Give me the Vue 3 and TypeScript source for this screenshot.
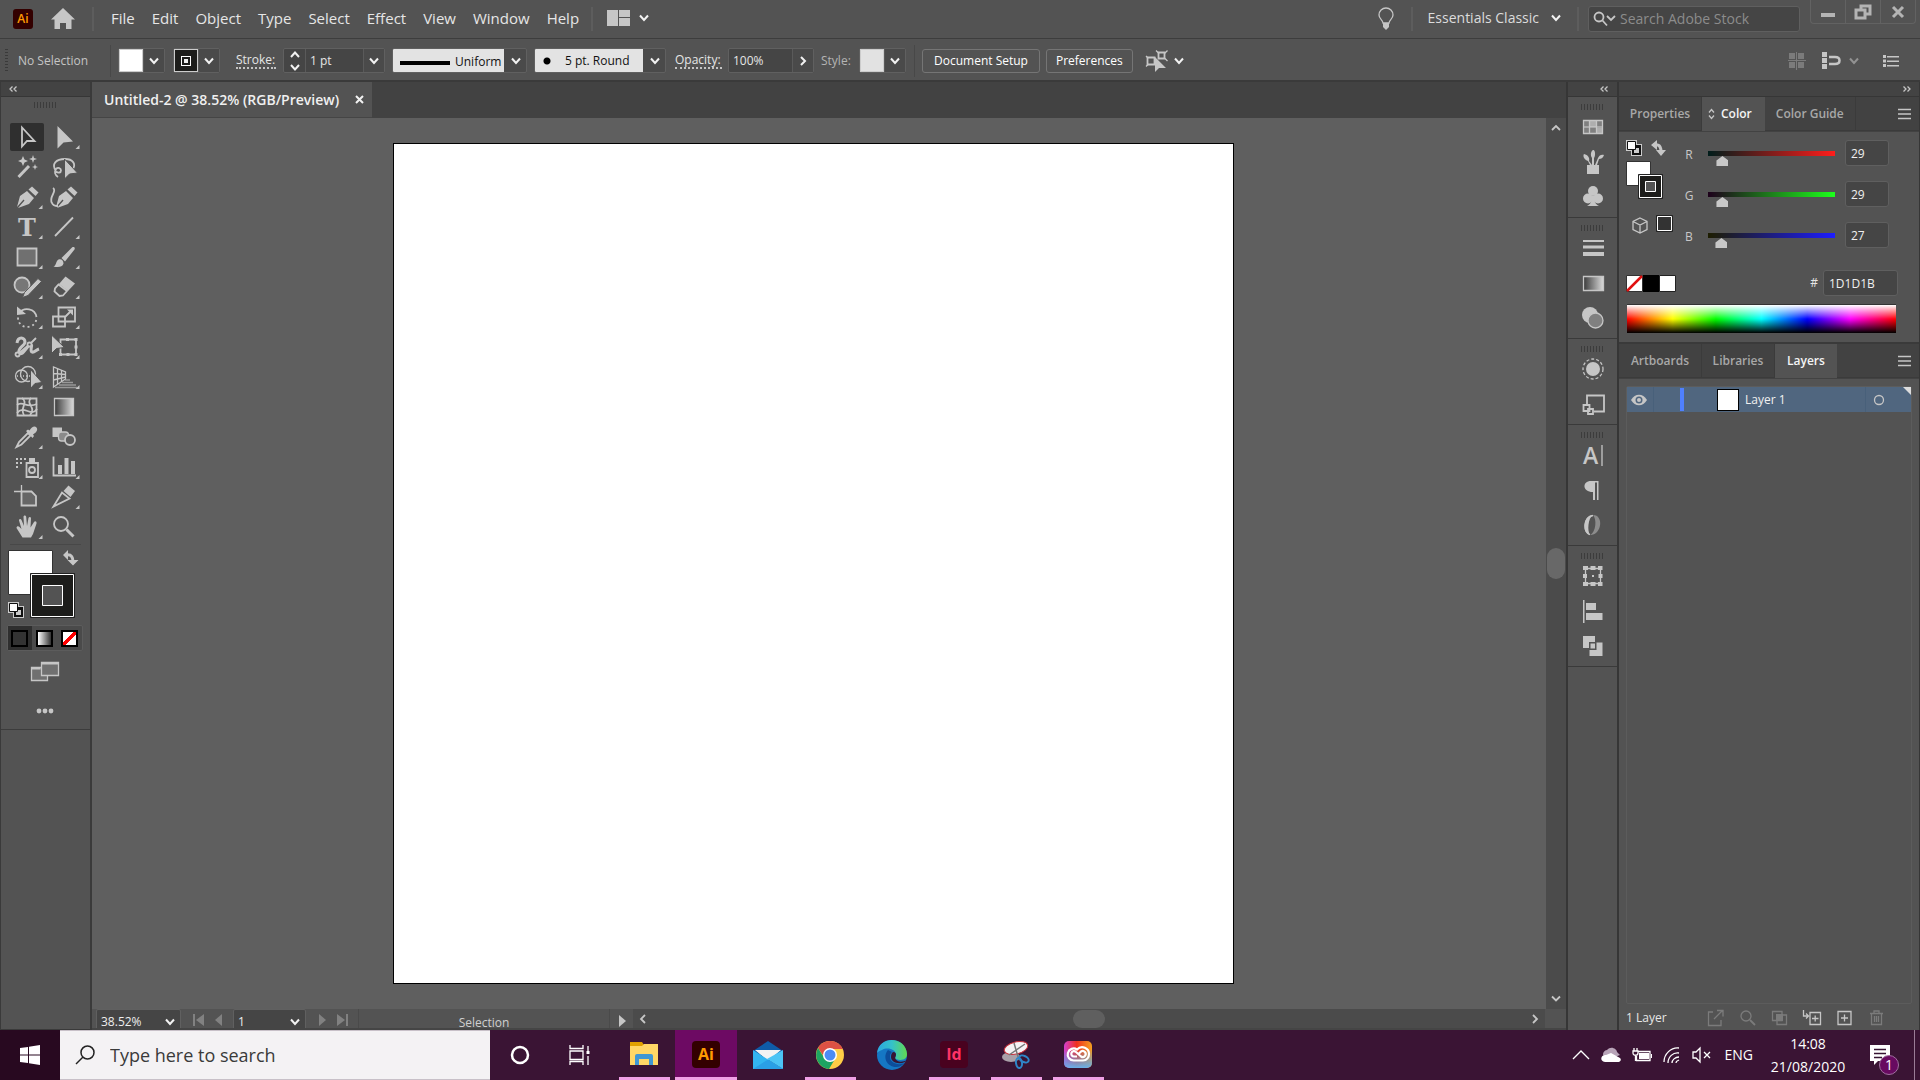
<script setup lang="ts">
import { ref } from 'vue'

interface Tool { name: string; icon: string; more?: boolean }
interface Glyph { name: string; icon: string }
interface Channel { id: string; value: number; track: string }
interface TaskApp { name: string; icon: string; state: 'idle' | 'open' | 'active' }

const menus = ['File', 'Edit', 'Object', 'Type', 'Select', 'Effect', 'View', 'Window', 'Help']

const penNib = '<path class="f" d="M7 24 10 13 17 8 24 15 19 21 8 25 14.500 17.500 13.500 16.500z"/><path class="f" d="M18.500 6.500 22 3.500 28.500 9.500 25.500 13z"/>'

const tools: Tool[] = [
  { name: 'Selection', icon: '<path class="s" d="M12 4.500v19l5-5.500h7.500z"/>' },
  { name: 'Direct Selection', more: true, icon: '<path class="f" d="M10.500 3v22.500l6-6 9.500-1z"/>' },
  { name: 'Magic Wand', icon: '<path class="s3" d="M8.500 24 19 13"/><path class="f" d="m13 3 1.500 3.500L18 8l-3.500 1.500L13 13l-1.500-3.500L8 8l3.500-1.500zM23 2l1 3 3 1-3 1-1 3-1-3-3-1 3-1zM25 11l.8 2.200 2.200.8-2.200.8L25 17l-.8-2.200L22 14l2.200-.8z"/>' },
  { name: 'Lasso', icon: '<path class="s" d="M9 18c-5-7 0-12 9-12 8 0 11 5 8 10M11 24c-3-2-4-5-2-8 2-2 5-1 5 1.500S11 20 9 18.500"/><path class="f" stroke="#535353" d="M17.500 6v20l5-5 8-1z"/>' },
  { name: 'Pen', more: true, icon: penNib },
  { name: 'Curvature', icon: '<g transform="translate(2 0)">' + penNib + '</g><path class="s" d="M6 5c5 3-5 9-1 15 1 3 4 3 6 3"/>' },
  { name: 'Type', more: true, icon: '<text class="f" x="17" y="23" text-anchor="middle" font-family="DejaVu Serif, serif" font-weight="700" font-size="24">T</text>' },
  { name: 'Line Segment', more: true, icon: '<path class="s" d="M8 23 26 4.500"/>' },
  { name: 'Rectangle', more: true, icon: '<path class="s" style="fill:#707070" d="M7.500 5.500h19v17h-19z"/>' },
  { name: 'Paintbrush', more: true, icon: '<path class="f" d="M6.500 23.500c3-1 2-5 5-7 3-1 5 1 5 4-1 4-6 4-10 3zM14.500 15 25 4.500c1.500-1 3.500 0 2.500 2L18 18.500z"/>' },
  { name: 'Shaper', more: true, icon: '<circle class="s" style="fill:#777" cx="12" cy="12" r="7.500"/><path class="f" stroke="#535353" d="M12.500 24.500l2-5L28 5.500l3.500 3L18 22.500z"/>' },
  { name: 'Eraser', more: true, icon: '<path class="f" d="m18.500 3.500 9.500 7-7 7.500-9-7z"/><path class="s" d="m11.500 11.500 8.500 6.500-4 4.500-3.500.5-5-4.500.5-3z"/>' },
  { name: 'Rotate', more: true, icon: '<path class="s" d="M9.500 9.500C14 4 25 5 26.500 14"/><path class="f" d="M7 3.500V12l9-1z"/><path class="s" stroke-dasharray="2 3" d="M8 14.500C8 27 26 27 26.500 15"/>' },
  { name: 'Scale', more: true, icon: '<path class="s" d="M11.500 4.500h16.500v14H11.500zM6 13.500h12v10H6zM18 14l5-5"/><path class="f" d="M20 6.500h6v6z"/>' },
  { name: 'Width', more: true, icon: '<path class="s3" d="M7 10c1-7 8-6 8-1 0 4-8 6-6 11 4 3 7-6 11-8 4-1-1 5 2 7 2 1 4-2 7-3"/><path class="s" d="M8 21 20 11M20 11l6-6"/><circle class="s" cx="7.500" cy="21.500" r="2" style="fill:#535353"/><circle class="s" cx="19.500" cy="11.500" r="2" style="fill:#535353"/>' },
  { name: 'Free Transform', more: true, icon: '<path class="s" d="M13.500 6.500h15.500v15H13.500z"/><path class="f" d="M19 5h3v3h-3zM27.500 5h3v3h-3zM27.500 12.500h3v3h-3zM27.500 20h3v3h-3zM19.500 20h3v3h-3zM12 20h3v3h-3z"/><path class="f" stroke="#535353" d="M4.500 2v18.500l5-5 8-1z"/>' },
  { name: 'Shape Builder', more: true, icon: '<circle class="s1" cx="11.500" cy="13" r="6"/><circle class="s1" cx="18" cy="11" r="7.500"/><path class="s1" stroke-dasharray="1 2" d="M7 13h17"/><path class="f" stroke="#535353" d="M20.500 6.500v19l4.500-5 7-1z"/>' },
  { name: 'Perspective Grid', more: true, icon: '<path class="s1" d="M6.500 4v20l12-8V9zM10.500 6v15M14.500 7.500v11M6.500 10.500l12 1M6.500 17l12-3"/><path class="s1" opacity=".6" d="M18 17h5M15 19.500h11M12 22h17M8 24.500h22"/>' },
  { name: 'Mesh', icon: '<path class="s" d="M7.500 5.500h19v17h-19z"/><path class="s" d="M7 12c6-5 9 4 20-1M7 20c7-9 14 5 20-4M12 5c7 5-3 10 2 17M21 5c-6 6 6 9-1 17"/>' },
  { name: 'Gradient', icon: '<path class="s1" style="fill:url(#ramp)" d="M7.500 5.500h19v17h-19z"/>' },
  { name: 'Eyedropper', more: true, icon: '<path class="s" d="m18 10-9 9-2.500 5 5-2.500 9-9z"/><path class="f" d="M16 8l2-1.500 1.500 1C22 3 25 2.500 26.500 4.500S27 9 23 11.500l1 1.500-1.500 2z"/>' },
  { name: 'Blend', icon: '<path class="f" d="M5.500 4.500H15V14H5.500z"/><rect class="s1" x="11.500" y="9" width="10" height="9" rx="3" style="fill:#8a8a8a"/><circle class="s" cx="23" cy="17" r="5" style="fill:#5c5c5c"/>' },
  { name: 'Symbol Sprayer', more: true, icon: '<path class="s" d="M16.500 10h11.500v14H16.500z"/><path class="f" d="M19 5h6v4h-6z"/><circle class="s" cx="22" cy="17" r="3"/><path class="f" d="M6 5h2v2H6zM10 5h2v2h-2zM14 5h2v2h-2zM6 9h2v2H6zM10 9h2v2h-2zM6 13h2v2H6z"/>' },
  { name: 'Column Graph', more: true, icon: '<path class="s" d="M6.500 3.500V22.500H29"/><path class="f" d="M11 12h4v9h-4zM17.500 5h4v16h-4zM24 8h4v13h-4z"/>' },
  { name: 'Artboard', icon: '<path class="s1" d="M4 8.500h8M11.500 2v6"/><path class="s" style="fill:#666" d="M11.500 8.500h10l4.500 4.500v9.500H11.500z"/>' },
  { name: 'Slice', more: true, icon: '<path class="s" d="M6.500 23.500 15 9.500l7.500 6z"/><path class="f" d="m16.500 8 5-5.500 6.500 5.500-4.500 6z"/>' },
  { name: 'Hand', more: true, icon: '<path class="f" d="M12.500 24.500 6.500 15c0-2 2-2 3-1l2 2L9 7.500c0-2 2-2 2.500-.5l2.500 6-.5-9c0-2 2.500-2 2.700 0l.8 9 1.500-8c.5-1.500 2.500-1.500 2.500.5l-.5 9L24 9c1-1.500 3-.5 2.500 1.500L23 21l-2 3.500z"/>' },
  { name: 'Zoom', icon: '<circle class="s" cx="14" cy="11" r="7"/><path class="s3" d="m19.500 16.500 7 7"/>' },
]

const dockGroups: Glyph[][] = [
  [
    { name: 'Swatches', icon: '<path class="s1" d="M2.500 5.500h19v13h-19zM2.500 12h19M8.500 5.500v13M15.500 5.500v13"/><path class="f" d="M9 6h6v6H9zM16 13h5v5h-5z" opacity=".8"/><path class="f" opacity=".4" d="M3 6h5v5H3zM3 13h12v5H3zM16 6h5v5h-5z"/>' },
    { name: 'Brushes', icon: '<path class="f" d="M6 15h12v9H6zM9 15 7 11C2 9 2 5 3 4c4 1 6 4 5 7l3 4zM11 15V8C9 5 10 1 12 0s3 5 1 8v7zM14 15l3-7c1-3 4-4 6-3-1 3-3 4-5 4l-2 6z"/>' },
    { name: 'Symbols', icon: '<circle class="f" cx="12" cy="6" r="5"/><circle class="f" cx="7" cy="13.500" r="5"/><circle class="f" cx="17" cy="13.500" r="5"/><path class="f" d="M11 11h2c0 5 1 8 5 10H6c4-2 5-5 5-10z"/>' },
  ],
  [
    { name: 'Stroke', icon: '<path class="f" d="M2 4h21v2H2zM2 9.500h21v3H2zM2 16h21v4H2z"/>' },
    { name: 'Gradient', icon: '<path class="s1" style="fill:url(#ramp)" d="M2.500 5.500h20v14h-20z"/>' },
    { name: 'Transparency', icon: '<circle class="f" cx="9" cy="9" r="8"/><circle class="s1" style="fill:#808080" cx="14.500" cy="14.500" r="7.500"/>' },
  ],
  [
    { name: 'Appearance', icon: '<circle class="f" cx="12" cy="12" r="7"/><circle class="s1" cx="12" cy="12" r="10" stroke-dasharray="3 2"/>' },
    { name: 'Graphic Styles', icon: '<path class="s" d="M6 12V3.500h17v16H13M2.500 13h6v6h-6zM7 17h5v5H7z"/>' },
  ],
  [
    { name: 'Character', icon: '<text class="f" x="2" y="21" font-family="Open Sans, sans-serif" font-weight="600" font-size="23">A</text><path class="s1" d="M21 2v21"/>' },
    { name: 'Paragraph', icon: '<path class="f" d="M17.500 3v19H16V4.500h-2V22h-2v-8C1 14 1 3 10 3z"/>' },
    { name: 'OpenType', icon: '<path class="f" d="M12 2C1 3 1 20 9 22c-3-4-2-17 3-20z"/><path class="f" opacity=".5" d="M12 2c11 0 9 20-3 20 6-3 7-16 3-20z"/><path class="s1" d="M12 2.500C2 4 2 21 9 21.500"/>' },
  ],
  [
    { name: 'Transform', icon: '<path class="s1" d="M4.500 4.500h15v15h-15z"/><path class="f" d="M2 2h5v4H2zM9.500 2h5v4h-5zM17 2h4.500v4H17zM2 10h4v4H2zM17.500 10h4v4h-4zM2 18h5v4H2zM9.500 18h5v4h-5zM17 18h4.500v4H17zM11 11h2v2h-2z"/>' },
    { name: 'Align', icon: '<path class="f" d="M2 1h1.500v23H2zM5 4h10v7H5zM5 14h16.500v7H5z"/>' },
    { name: 'Pathfinder', icon: '<path class="f" d="M2 2h12v6H8v6H2zM15.500 8.500h6V22H8.500v-6h7zM9.500 9.500H14v5H9.500z"/>' },
  ],
]

const channels = ref<Channel[]>([
  { id: 'R', value: 29, track: 'linear-gradient(90deg, #001d1b, #ff1d1b)' },
  { id: 'G', value: 29, track: 'linear-gradient(90deg, #1d001b, #1dff1b)' },
  { id: 'B', value: 27, track: 'linear-gradient(90deg, #1d1d00, #1d1dff)' },
])
const hex = ref('1D1D1B')

const layerActions: (Glyph & { off: boolean })[] = [
  { name: 'Collect for Export', off: true, icon: '<path class="s1" d="M6 3H1.500v13.500H14V11M7 10l8.500-8.500M10 1.500h6v6"/>' },
  { name: 'Locate Object', off: true, icon: '<circle class="s1" cx="7" cy="7" r="5"/><path class="s" d="m11 11 5 5"/>' },
  { name: 'Make Clipping Mask', off: true, icon: '<path class="s1" d="M1.500 2.500h9.500v9H1.500zM6 6h9.500v9.500H6z"/><path class="f" d="M5 5h7v7H5z"/>' },
  { name: 'Create New Sublayer', off: false, icon: '<path class="s1" d="M.500 1v6H5M3 4.500 5.500 7 3 9.500M7 3.500h10.500v12H7zM12.200 6.500v6M9 9.500h6.500"/>' },
  { name: 'Create New Layer', off: false, icon: '<path class="s1" d="M3 2.500h13v13H3zM9.500 5.500v7M6 9h7"/>' },
  { name: 'Delete', off: true, icon: '<path class="s1" d="M3 4.500h13M7 4V2h5v2M4.500 4.500v11h10v-11M7.500 7v6M9.500 7v6M11.500 7v6"/>' },
]

const apps: TaskApp[] = [
  { name: 'File Explorer', state: 'open', icon: '<path fill="#e0a100" d="M2 4h12l2 3v5H2z"/><path fill="#ffd766" d="M2 8h12l2-2h14v21H2z"/><path fill="#3f97d4" d="M7 27V18q0-2 2-2h14q2 0 2 2v9h-4v-6H11v6z"/>' },
  { name: 'Illustrator', state: 'active', icon: '<rect x="2" y="3" width="28" height="27" rx="4" fill="#330000"/><text x="16" y="22" text-anchor="middle" font-family="Open Sans, sans-serif" font-weight="700" font-size="16" fill="#ff9a00">Ai</text>' },
  { name: 'Mail', state: 'idle', icon: '<path fill="#0f5ba8" d="M1 13 16 3l15 10v4H1z"/><path fill="#f3f3f3" d="M3 12h26L16 23z"/><path fill="#33b5f0" d="M1 12 31 31H1z"/><path fill="#4cc4f5" d="M31 12v19L15 21z"/><path fill="#2a9fe6" d="M1 31h30L16 21.500z"/>' },
  { name: 'Chrome', state: 'open', icon: '<circle cx="16" cy="17" r="14" fill="#ffcd46"/><path fill="#dd5144" d="M16 11h12.700A14 14 0 0 0 4 10l7 10z"/><path fill="#1da462" d="M4 10A14 14 0 0 0 15 31l6-10H11z"/><circle cx="16" cy="17" r="7" fill="#fff"/><circle cx="16" cy="17" r="5.500" fill="#4c8bf5"/>' },
  { name: 'Edge', state: 'idle', icon: '<circle cx="16" cy="17" r="15" fill="#1577c4"/><path fill="url(#edge)" d="M1 15C3-3 30-2 31 16c0 6-6 7-11 5-2-1 0-2 0-4 0-6-9-8-14-5-3 1-4 2-5 3z"/><path fill="#0c4d9b" d="M12 12c-6 7-1 17 8 17 4 0 7-2 8-4-5 3-15 0-14-7 0-2 1-3 2-4z"/><path fill="#371433" d="M18 14c3 1 2 4 1 6 2 5 8 4 12 2l-2 2c-7 3-14 0-14-5 0-3 1-5 3-5z"/>' },
  { name: 'InDesign', state: 'open', icon: '<rect x="2" y="3" width="28" height="27" rx="4" fill="#49021f"/><text x="16" y="22" text-anchor="middle" font-family="Open Sans, sans-serif" font-weight="700" font-size="16" fill="#ff3366">Id</text>' },
  { name: 'Snipping Tool', state: 'open', icon: '<ellipse cx="11" cy="19" rx="9" ry="5" fill="#a9a0a8"/><ellipse cx="16" cy="10" rx="12" ry="6" transform="rotate(-14 16 10)" fill="#f5f2f4" stroke="#c8323c"/><path d="M14 5l5 17M9 17 25 6" stroke="#777" stroke-width="1.500"/><g fill="none" stroke="#2f86c8" stroke-width="2"><ellipse cx="24" cy="21" rx="5" ry="3" transform="rotate(25 24 21)"/><ellipse cx="19" cy="25" rx="3" ry="5" transform="rotate(-8 19 25)"/></g>' },
  { name: 'Creative Cloud', state: 'open', icon: '<rect x="2" y="3" width="28" height="27" rx="5" fill="url(#ccH)"/><rect x="2" y="3" width="28" height="27" rx="5" fill="url(#ccV)"/><g fill="none" stroke="#fff" stroke-width="2.200"><path d="M21 22.500H12a6 6 0 1 1 3-11c5-5 12-1 12 4.500 0 3-2 6.500-6 6.500"/><path d="M15 18.500h-3a2.700 2.700 0 1 1 2-4.500l5 4.500a3 3 0 1 0 0-5l-2 2"/></g>' },
]

const chevron = 'M1 1.500 5 6l4-4.500'
</script>

<template>
  <div class="app">
    <svg class="defs" aria-hidden="true">
      <defs>
        <linearGradient id="ramp"><stop offset="0" stop-color="#3a3a3a" /><stop offset="1" stop-color="#dcdcdc" /></linearGradient>
        <linearGradient id="edge"><stop offset="0" stop-color="#2ba6e0" /><stop offset=".5" stop-color="#35c1c9" /><stop offset="1" stop-color="#62d94f" /></linearGradient>
        <linearGradient id="ccH"><stop offset="0" stop-color="#d53fd0" /><stop offset=".45" stop-color="#f03020" /><stop offset="1" stop-color="#f5a020" /></linearGradient>
        <linearGradient id="ccV" x2="0" y2="1"><stop offset=".3" stop-color="#48a0f0" stop-opacity="0" /><stop offset="1" stop-color="#6ab0e8" /></linearGradient>
      </defs>
    </svg>

    <header class="title">
      <svg class="logo" width="20" height="20" viewBox="0 0 20 20"><rect width="20" height="20" rx="3" fill="#330000" /><text x="10" y="14" text-anchor="middle" font-family="Open Sans, sans-serif" font-weight="600" font-size="12" fill="#ff9a00">Ai</text></svg>
      <button class="bare home" aria-label="Home"><svg width="24" height="22" viewBox="0 0 24 22"><path class="f" d="M12 0 0 11.500h3.500V21H9v-6h6v6h5.500v-9.500H24z" /></svg></button>
      <nav class="menus"><button v-for="m in menus" :key="m" class="bare">{{ m }}</button></nav>
      <button class="bare arrange" aria-label="Arrange Documents">
        <svg width="23" height="16" viewBox="0 0 23 16"><path class="f" d="M0 0h11v16H0zM12 0h11v7H12zM12 8h11v8H12z" /></svg>
        <svg width="10" height="8" viewBox="0 0 10 8"><path class="w" :d="chevron" /></svg>
      </button>
      <span class="grow"></span>
      <button class="bare bulb" aria-label="Discover"><svg width="16" height="22" viewBox="0 0 16 22"><path class="s1" d="M5 15c0-3-4-4-4-8a7 7 0 0 1 14 0c0 4-4 5-4 8z" /><path class="f" d="M5 15h6v4l-3 3-3-3z" /></svg></button>
      <button class="bare workspace">Essentials Classic <svg width="10" height="8" viewBox="0 0 10 8"><path class="w" :d="chevron" /></svg></button>
      <label class="stock">
        <svg width="22" height="16" viewBox="0 0 22 16"><circle class="s" cx="6" cy="6" r="4.500" /><path class="s" d="m9.500 9.500 4.500 5M14 5l4 4 4-4" /></svg>
        <input type="text" placeholder="Search Adobe Stock" aria-label="Search Adobe Stock">
      </label>
      <div class="window">
        <button class="bare" aria-label="Minimize"><svg width="14" height="16" viewBox="0 0 14 16"><path fill="#b4b4b4" d="M0 9h14v4H0z" /></svg></button>
        <button class="bare" aria-label="Restore"><svg width="18" height="16" viewBox="0 0 18 16"><path fill="none" stroke="#b4b4b4" stroke-width="3" d="M7 5V2h9v8h-4M2 6h9v8H2z" /></svg></button>
        <button class="bare" aria-label="Close"><svg width="14" height="14" viewBox="0 0 14 14"><path fill="none" stroke="#b4b4b4" stroke-width="3" d="m2 2 10 10M12 2 2 12" /></svg></button>
      </div>
    </header>

    <section class="control" aria-label="Control">
      <span class="vgrip"></span>
      <span class="selection">No Selection</span>
      <div class="combo">
        <button class="swatch white" aria-label="Fill"></button>
        <button class="drop" aria-label="Fill swatches"><svg width="10" height="8" viewBox="0 0 10 8"><path class="w" :d="chevron" /></svg></button>
      </div>
      <div class="combo">
        <button class="swatch dark" aria-label="Stroke color"><span></span></button>
        <button class="drop" aria-label="Stroke swatches"><svg width="10" height="8" viewBox="0 0 10 8"><path class="w" :d="chevron" /></svg></button>
      </div>
      <label class="dotted strokelabel" for="weight">Stroke:</label>
      <div class="combo weight">
        <button class="spin" aria-label="Step weight"><svg width="10" height="20" viewBox="0 0 10 20"><path class="w" d="M1 6l4-4.500L9 6M1 14l4 4.500L9 14" /></svg></button>
        <input id="weight" type="text" value="1 pt">
        <button class="drop" aria-label="Weights"><svg width="10" height="8" viewBox="0 0 10 8"><path class="w" :d="chevron" /></svg></button>
      </div>
      <div class="pick profile">
        <select aria-label="Width profile"><option>Uniform</option></select>
        <svg width="10" height="8" viewBox="0 0 10 8"><path class="w" :d="chevron" /></svg>
      </div>
      <div class="pick brush">
        <select aria-label="Brush definition"><option>5 pt. Round</option></select>
        <svg width="10" height="8" viewBox="0 0 10 8"><path class="w" :d="chevron" /></svg>
      </div>
      <label class="dotted opacitylabel" for="opacity">Opacity:</label>
      <div class="combo opacity">
        <input id="opacity" type="text" value="100%">
        <button class="drop" aria-label="Opacity slider"><svg width="8" height="10" viewBox="0 0 8 10"><path class="w" d="m2 1 4 4-4 4" /></svg></button>
      </div>
      <span class="dim">Style:</span>
      <div class="combo">
        <button class="swatch pale" aria-label="Graphic style"></button>
        <button class="drop" aria-label="Graphic styles"><svg width="10" height="8" viewBox="0 0 10 8"><path class="w" :d="chevron" /></svg></button>
      </div>
      <div class="actions">
        <button>Document Setup</button>
        <button>Preferences</button>
      </div>
      <button class="bare similar" aria-label="Select Similar Objects">
        <svg width="22" height="22" viewBox="0 0 22 22"><path class="s" d="M1.500 7.500h7v7h-7zM12.500 2.500h6v6h-6z" /><path class="s1" d="M10 .5l3 3M21.500.5l-3 3M21.500 11l-3-3M0 6l2 2M0 16.500l2-2" /><path class="f" d="M9 7v15l4-4h7z" /></svg>
        <svg width="10" height="8" viewBox="0 0 10 8"><path class="w" :d="chevron" /></svg>
      </button>
      <span class="grow"></span>
      <svg width="18" height="18" viewBox="0 0 18 18" opacity=".35"><path class="f" d="M1 1h6v6H1zM10 1h6v6h-6zM1 10h6v6H1zM10 10h6v6h-6zM8 0h1v18H8zM0 8h18v1H0z" /></svg>
      <svg width="20" height="20" viewBox="0 0 20 20" class="snap"><path class="f" d="M1 1h5v5H1zM1 7h5v5H1zM1 13h5v5H1z" /><path fill="none" stroke="#c6c6c6" stroke-width="2.500" d="M8 6h6c6 0 6 7 0 7H8" /></svg>
      <svg width="10" height="8" viewBox="0 0 10 8" opacity=".4"><path class="w" :d="chevron" /></svg>
      <button class="bare options" aria-label="Control menu"><svg width="16" height="12" viewBox="0 0 16 12"><path class="f" d="M0 0h3v3H0zM0 4.500h3v3H0zM0 9h3v3H0zM4 1h12v1.500H4zM4 5.500h12V7H4zM4 10h12v1.500H4z" /></svg></button>
    </section>

    <main class="work">
      <aside class="toolbox">
        <div class="strip left"><svg width="8" height="6" viewBox="0 0 8 6"><path class="s1" d="M3.500.5 1 3l2.500 2.500M7.500.5 5 3l2.500 2.500" /></svg></div>
        <div class="tools">
          <span class="grip"></span>
          <div class="grid">
            <button v-for="(t, i) in tools" :key="t.name" class="tool" :class="{ on: i === 0 }" :aria-label="t.name">
              <svg width="34" height="28" viewBox="0 0 34 28"><g v-html="t.icon"></g><path v-if="t.more" class="f" d="M28.500 26h4v-4z" /></svg>
            </button>
          </div>
          <svg class="paint" width="76" height="70" viewBox="0 0 76 70">
            <path fill="#fff" stroke="#333" d="M.500 .500h44v44h-44z" />
            <path fill="#1d1d1b" stroke="#222" d="M22.500 23.500h44v44h-44z" />
            <path fill="none" stroke="#fff" d="M23.500 24.500h42v42h-42z" />
            <path fill="#535353" stroke="#fff" d="M34.500 35.500h20v20h-20z" />
            <path class="s3" d="M58 5c6-1 7 3 7 7" /><path class="f" d="M60 0v10l-5-5zM59.500 10h11L65 15.500z" />
            <path fill="#ccc" d="M0 52h11v4h5v12H5v-5H0z" /><path fill="#111" d="M6 57h9v10H6z" /><path fill="#ccc" d="M8 60h5v5H8z" /><path fill="#fff" stroke="#111" d="M1.500 53.500h8v8h-8z" />
          </svg>
          <div class="modes">
            <button class="on" aria-label="Color"><i></i></button>
            <button aria-label="Gradient"><i class="ramp"></i></button>
            <button aria-label="None"><i class="none"></i></button>
          </div>
          <button class="bare screen" aria-label="Screen mode"><svg width="28" height="22" viewBox="0 0 28 22"><path class="s1" style="fill:#707070" d="M.500 6.500h16v13H.500z" /><path class="s1" style="fill:#707070" d="M10.500 1.500h17v13h-17z" /><path class="s" d="M10.500 2.500h17M.500 7.500h9" /></svg></button>
          <button class="bare dots" aria-label="Edit toolbar"><svg width="18" height="6" viewBox="0 0 18 6"><circle class="f" cx="3" cy="3" r="2.400" /><circle class="f" cx="9" cy="3" r="2.400" /><circle class="f" cx="15" cy="3" r="2.400" /></svg></button>
        </div>
      </aside>

      <section class="document">
        <div class="doctabs">
          <div class="doctab"><span>Untitled-2 @ 38.52% (RGB/Preview)</span><button class="bare" aria-label="Close document"><svg width="9" height="9" viewBox="0 0 9 9"><path class="w" d="m1 1 7 7M8 1 1 8" /></svg></button></div>
        </div>
        <div class="viewport">
          <div class="canvas"><div class="artboard"></div></div>
          <div class="vscroll">
            <svg width="10" height="8" viewBox="0 0 10 8"><path class="s" d="m1 6 4-4 4 4" /></svg>
            <span class="vthumb"></span>
            <svg width="10" height="8" viewBox="0 0 10 8"><path class="s" d="m1 1.500 4 4 4-4" /></svg>
          </div>
        </div>
        <footer class="status">
          <div class="pick zoom"><select aria-label="Zoom"><option>38.52%</option></select><svg width="10" height="8" viewBox="0 0 10 8"><path class="w" :d="chevron" /></svg></div>
          <div class="step"><svg width="12" height="12" viewBox="0 0 12 12"><path class="f" d="M0 0h2v12H0zM11 0v12L3 6z" /></svg><svg width="8" height="12" viewBox="0 0 8 12"><path class="f" d="M7 0v12L0 6z" /></svg></div>
          <div class="pick board"><select aria-label="Artboard"><option>1</option></select><svg width="10" height="8" viewBox="0 0 10 8"><path class="w" :d="chevron" /></svg></div>
          <div class="step"><svg width="8" height="12" viewBox="0 0 8 12"><path class="f" d="M1 0v12l7-6z" /></svg><svg width="12" height="12" viewBox="0 0 12 12"><path class="f" d="M10 0h2v12h-2zM1 0v12l8-6z" /></svg></div>
          <span class="current">Selection</span>
          <button class="bare play" aria-label="Status menu"><svg width="7" height="12" viewBox="0 0 7 12"><path class="f" d="M0 0v12l7-6z" /></svg></button>
          <div class="hscroll">
            <svg width="8" height="10" viewBox="0 0 8 10"><path class="s" d="M6 1 2 5l4 4" /></svg>
            <span class="hthumb"></span>
            <svg width="8" height="10" viewBox="0 0 8 10"><path class="s" d="m2 1 4 4-4 4" /></svg>
          </div>
        </footer>
      </section>

      <aside class="dock">
        <div class="strip"><svg width="8" height="6" viewBox="0 0 8 6"><path class="s1" d="M3.500.5 1 3l2.500 2.500M7.500.5 5 3l2.500 2.500" /></svg></div>
        <div v-for="(group, g) in dockGroups" :key="g" class="group">
          <span class="grip"></span>
          <button v-for="d in group" :key="d.name" class="bare" :aria-label="d.name"><svg width="24" height="25" viewBox="0 0 24 25" v-html="d.icon"></svg></button>
        </div>
      </aside>

      <aside class="panels">
        <div class="strip"><svg width="8" height="6" viewBox="0 0 8 6"><path class="s1" d="M.500.500 3 3 .500 5.500M4.500.500 7 3 4.500 5.500" /></svg></div>
        <section class="color" aria-label="Color panel">
          <div class="tabs" role="tablist">
            <button role="tab" class="w84">Properties</button>
            <button role="tab" class="on"><svg width="7" height="12" viewBox="0 0 7 12"><path class="s1" d="m1 4.500 2.500-3 2.500 3M1 7.500l2.500 3 2.500-3" /></svg>Color</button>
            <button role="tab" class="w92">Color Guide</button>
            <button class="burger" aria-label="Panel menu"><svg width="13" height="10" viewBox="0 0 13 10"><path class="s1" d="M0 .5h13M0 5h13M0 9.500h13" /></svg></button>
          </div>
          <div class="mixer">
            <svg class="proxy" width="52" height="98" viewBox="0 0 52 98">
              <path fill="#ccc" d="M0 0h11v4h5v12H5v-5H0z" /><path fill="#111" d="M6 5h9v10H6z" /><path fill="#ccc" d="M8 8h5v5H8z" /><path fill="#fff" stroke="#111" d="M1.500 1.500h8v8h-8z" />
              <path class="s3" d="M28 5c7-1 7 4 7 7" /><path class="f" d="M31 0v10l-6-5zM30 10h10l-5 6z" />
              <path fill="#fff" stroke="#333" d="M.500 21.500h24v24h-24z" /><path fill="#1d1d1b" stroke="#222" d="M12.500 34.500h24v24h-24z" /><path fill="none" stroke="#fff" d="M13.500 35.500h22v22h-22z" /><path fill="#535353" stroke="#fff" d="M19.500 41.500h10v10h-10z" />
              <path class="s1" d="m14 78 7 3.500v8L14 93l-7-3.500v-8zM7 81.500l7 3.500 7-3.500M14 85v8" />
              <path fill="#333" stroke="#222" d="M30.500 75.500h16v16h-16z" /><path fill="none" stroke="#fff" d="M31.500 76.500h14v14h-14z" />
            </svg>
            <div class="channels">
              <div v-for="c in channels" :key="c.id" class="channel">
                <label :for="'range' + c.id">{{ c.id }}</label>
                <input :id="'range' + c.id" v-model.number="c.value" type="range" min="0" max="255" :style="{ '--track': c.track }">
                <input v-model.number="c.value" class="field" type="text" :aria-label="c.id + ' value'">
              </div>
            </div>
          </div>
          <div class="hexrow">
            <svg width="50" height="17" viewBox="0 0 50 17"><path fill="#fff" stroke="#333" d="M.500 .500h16v16H.500z" /><path stroke="#e01010" stroke-width="2.500" d="M1 16 16 1" /><path fill="#000" d="M17 0h16v17H17z" /><path fill="#fff" stroke="#222" d="M33.500 .500h16v16h-16z" /></svg>
            <span class="grow"></span>
            <label for="hex">#</label>
            <input id="hex" v-model="hex" class="field" type="text">
          </div>
          <div class="spectrum"></div>
        </section>
        <section class="layers" aria-label="Layers panel">
          <div class="tabs" role="tablist">
            <button role="tab" class="w84">Artboards</button>
            <button role="tab" class="w74">Libraries</button>
            <button role="tab" class="on plain">Layers</button>
            <button class="burger" aria-label="Panel menu"><svg width="13" height="10" viewBox="0 0 13 10"><path class="s1" d="M0 .5h13M0 5h13M0 9.500h13" /></svg></button>
          </div>
          <ul class="list">
            <li>
              <button class="bare eye" aria-label="Toggle visibility"><svg width="16" height="12" viewBox="0 0 16 12"><path class="f" d="M0 6c4-7 12-7 16 0-4 7-12 7-16 0z" /><circle cx="8" cy="6" r="3.500" fill="#50667f" /><circle class="f" cx="8" cy="6" r="2" /></svg></button>
              <span class="bar"></span>
              <span class="thumb"></span>
              <span class="grow">Layer 1</span>
              <button class="bare target" aria-label="Target layer"><svg width="10" height="10" viewBox="0 0 10 10"><circle class="s1" cx="5" cy="5" r="4.500" /></svg></button>
              <svg class="corner" width="8" height="8" viewBox="0 0 8 8"><path fill="#ddd" d="M0 0h8v8z" /></svg>
            </li>
          </ul>
          <div class="foot">
            <span class="grow">1 Layer</span>
            <button v-for="a in layerActions" :key="a.name" class="bare" :class="{ off: a.off }" :aria-label="a.name"><svg width="19" height="18" viewBox="0 0 19 18" v-html="a.icon"></svg></button>
          </div>
        </section>
      </aside>
    </main>

    <footer class="taskbar">
      <button class="bare start" aria-label="Start"><svg width="20" height="20" viewBox="0 0 20 20"><path fill="#fff" d="M0 3l8-1v7.500H0zM9 1.800 20 0v9.500H9zM0 10.500h8V18l-8-1zM9 10.500h11V20L9 18.200z" /></svg></button>
      <label class="find">
        <svg width="20" height="20" viewBox="0 0 20 20"><circle cx="12.500" cy="7.500" r="6.500" fill="none" stroke="#222" stroke-width="1.500" /><path d="m8 12-7 7" stroke="#222" stroke-width="1.500" /></svg>
        <input type="text" placeholder="Type here to search" aria-label="Type here to search">
      </label>
      <button class="bare cell" aria-label="Cortana"><svg width="20" height="20" viewBox="0 0 20 20"><circle cx="10" cy="10" r="8" fill="none" stroke="#fff" stroke-width="2.500" /></svg></button>
      <button class="bare cell" aria-label="Task View"><svg width="22" height="20" viewBox="0 0 22 20"><path fill="none" stroke="#fff" stroke-width="1.300" d="M1 0v3.500h13V0M1 6h13v8.500H1zM1 20v-3.500h13V20M19 1v5M19 11v9" /><path fill="#fff" d="M17.500 6h3v3h-3z" /></svg></button>
      <nav class="apps">
        <button v-for="a in apps" :key="a.name" class="bare taskapp" :class="a.state" :aria-label="a.name"><svg width="32" height="32" viewBox="0 0 32 32" v-html="a.icon"></svg></button>
      </nav>
      <span class="grow"></span>
      <div class="tray">
        <svg width="18" height="12" viewBox="0 0 18 12"><path class="w1" d="m1 10 8-8 8 8" /></svg>
        <svg width="20" height="16" viewBox="0 0 20 16"><path fill="#b8a4b8" d="M2 8a5 5 0 0 1 4-5c4-5 10-1 10 2l3 3-8 3z" /><path fill="#fff" d="M4 15C-2 14 0 7 5 8l5-2 9 5c2 2 0 4-2 4z" /></svg>
        <svg width="20" height="16" viewBox="0 0 20 16"><path class="w1" d="M6 4.500h12v9H4.500V9M2 1v3M5 1v3M1 4h5v2c0 3-5 3-5 0zM3.500 8v6" /><path fill="#fff" d="M7 6h10v6H7zM19 7h1v4h-1z" /></svg>
        <svg width="18" height="18" viewBox="0 0 18 18"><path class="w1" d="M1 16C1 8 8 1 16 2M5 17c0-6 5-11 11-10M9 17c0-3 3-6 7-6M13 17c0-2 1-2 3-3" /></svg>
        <svg width="20" height="16" viewBox="0 0 20 16"><path class="w1" d="M1 5h3l4-4v14l-4-4H1zM12 5l6 6M18 5l-6 6" /></svg>
        <span class="lang">ENG</span>
        <span class="clock"><time>14:08</time><span>21/08/2020</span></span>
        <button class="bare notice" aria-label="Notifications"><svg width="20" height="20" viewBox="0 0 20 20"><path fill="#fff" d="M0 0h20v16H8l-4 4v-4H0z" /><path stroke="#371433" stroke-width="1.500" d="M4 4.500h12M4 8.500h12M4 12.500h8" /></svg><b>1</b></button>
      </div>
    </footer>
  </div>
</template>

<style>
body { background: #535353; }
.f { fill: #c6c6c6; }
.s, .s1, .s3, .w { fill: none; stroke: #c6c6c6; stroke-width: 1.8; }
.s1 { stroke-width: 1.3; }
.s3 { stroke-width: 3; }
.w { stroke: #f2f2f2; stroke-width: 2; }
.w1 { fill: none; stroke: #fff; stroke-width: 1.3; }
</style>

<style scoped>
.app { display: flex; flex-direction: column; height: 100vh; min-height: 960px; font-family: "Open Sans", "Noto Sans", sans-serif; font-size: 12px; line-height: 16px; color: #e6e6e6; background: #535353; }
.app * { box-sizing: border-box; }
.defs { width: 0; height: 0; position: absolute; }
svg { display: block; flex: none; overflow: visible; }
button, input, select { font: inherit; color: inherit; margin: 0; padding: 0; border: 0; border-radius: 0; background: none; outline: none; }
input { min-width: 0; }
.bare { display: flex; align-items: center; justify-content: center; }
.grow { flex: 1; }

.title { display: flex; align-items: center; height: 39px; padding-left: 13px; border-bottom: 1px solid #3d3d3d; font-size: 14px; line-height: 20px; flex: none; }
.logo { margin-right: 18px; }
.home { margin-right: 17px; }
.menus { display: flex; align-items: center; gap: 17px; height: 24px; padding: 0 12px 2px 17px; border-left: 2px solid #5d5d5d; border-right: 2px solid #5d5d5d; font-size: 15px; }
.arrange { gap: 9px; padding: 0 0 2px 14px; }
.bulb { padding-right: 17px; }
.workspace { gap: 12px; height: 24px; padding: 0 16px 2px 15px; border: solid #5d5d5d; border-width: 0 2px; color: #dcdcdc; }
.stock { display: flex; align-items: center; gap: 5px; width: 212px; height: 26px; margin-left: 9px; padding-left: 4px; background: #454545; border: 1px solid #5f5f5f; border-radius: 3px; }
.stock input { flex: 1; }
.stock input::placeholder { color: #8c8c8c; opacity: 1; }
.window { display: flex; align-self: flex-start; width: 106px; height: 24px; margin: 0 4px 0 10px; border: solid #626262; border-width: 0 1px 1px; border-radius: 0 0 4px 4px; }
.window button { flex: 1; }
.window button + button { border-left: 1px solid #626262; }

.control { display: flex; align-items: center; height: 43px; padding: 2px 0 0 5px; border-bottom: 2px solid #3a3a3a; flex: none; white-space: nowrap; }
.vgrip { width: 3px; height: 24px; background: repeating-linear-gradient(#3a3a3a 0 1px, transparent 1px 3px); }
.selection { width: 93px; height: 32px; line-height: 32px; margin-left: 10px; border-right: 1px solid #484848; color: #c4c4c4; }
.combo { display: flex; height: 25px; margin-left: 7px; border: 1px solid #606060; border-radius: 2px; background: #454545; }
.combo + .combo { margin-left: 8px; }
.drop { display: flex; align-items: center; justify-content: center; width: 21px; background: #4a4a4a; border-left: 1px solid #5a5a5a; }
.swatch { display: grid; place-items: center; width: 24px; border: 1px solid #ccc; }
.white { background: #fff; }
.dark { background: #1d1d1b; }
.dark span { width: 8px; height: 8px; background: #eee; border: 2px solid #1d1d1b; outline: 1px solid #fff; }
.pale { background: #e2e2e2; }
.dotted { border-bottom: 2px dotted #c4c4c4; line-height: 15px; }
.strokelabel { width: 40px; margin-left: 16px; }
.weight { width: 102px; }
.spin { display: grid; place-items: center; width: 22px; border-right: 1px solid #5a5a5a; }
.weight input { flex: 1; padding-left: 4px; }
.pick { display: grid; align-items: center; }
.pick > * { grid-area: 1 / 1; }
.pick svg { justify-self: end; margin-right: 6px; pointer-events: none; }
.pick select { width: 100%; height: 25px; appearance: none; border: 1px solid #606060; border-radius: 2px; }
.profile, .brush { margin-left: 7px; color: #111; }
.profile { width: 135px; }
.brush { width: 132px; }
.profile select { padding: 2px 0 0 62px; background: linear-gradient(#000, #000) 7px 12px / 50px 4px no-repeat, linear-gradient(90deg, #e3e3e3 111px, #4a4a4a 111px); }
.brush select { padding-left: 30px; background: radial-gradient(circle at 12px 12px, #000 3px, transparent 4px), linear-gradient(90deg, #e3e3e3 108px, #4a4a4a 108px); }
.opacitylabel { width: 47px; margin-left: 9px; }
.opacity { width: 86px; margin-left: 6px; }
.opacity input { flex: 1; padding-left: 4px; }
.dim { width: 31px; margin-left: 7px; color: #b4b4b4; }
.actions { display: flex; align-items: center; gap: 6px; height: 32px; margin-left: 8px; padding-left: 7px; border-left: 1px solid #484848; }
.actions button { height: 24px; padding: 0 11px; border: 1px solid #757575; border-radius: 3px; color: #fff; }
.actions button + button { padding: 0 9px; }
.similar { gap: 6px; margin-left: 13px; }
.snap { margin: 0 8px 0 15px; }
.options { margin: 0 21px 0 24px; }

.work { display: flex; flex: 1; min-height: 0; }
.strip { display: flex; align-items: center; justify-content: flex-end; height: 15px; padding-right: 8px; background: #434343; border-bottom: 1px solid #363636; flex: none; }
.strip.left { justify-content: flex-start; padding-left: 8px; }
.grip { width: 24px; height: 6px; background: repeating-linear-gradient(90deg, #3c3c3c 0 1px, transparent 1px 3px); }
.toolbox { width: 92px; border: solid #3a3a3a; border-width: 0 2px 1px 1px; flex: none; }
.tools { display: flex; flex-direction: column; align-items: center; height: 633px; padding-top: 5px; border-bottom: 1px solid #3c3c3c; }
.grid { display: grid; grid-template-columns: 34px 34px; column-gap: 3px; margin-top: 14px; padding-bottom: 2px; border-bottom: 1px solid #484848; }
.tool { display: flex; align-items: center; height: 30px; }
.tool.on { height: 28px; margin: 1px 0; background: #2f2f2f; border-radius: 2px; }
.paint { margin-top: 5px; }
.modes { display: flex; width: 76px; margin: 5px 2px 0 0; background: #4a4a4a; border: 1px solid #5c5c5c; border-radius: 2px; }
.modes button { display: grid; place-items: center; flex: 1; height: 24px; }
.modes .on { background: #2f2f2f; }
.modes i { width: 17px; height: 17px; border: 2px solid #000; background: #333; }
.modes .ramp { background: linear-gradient(90deg, #fff, #333); }
.modes .none { background: linear-gradient(135deg, #fff 40%, #f00 40% 60%, #fff 60%); }
.screen { margin: 10px 2px 0 0; }
.dots { margin: 25px 2px 0 0; }

.document { display: flex; flex: 1; flex-direction: column; min-width: 0; background: #5f5f5f; }
.doctabs { display: flex; height: 36px; background: #424242; flex: none; }
.doctab { display: flex; align-items: center; justify-content: space-between; width: 280px; padding: 0 8px 0 12px; background: #535353; border-bottom: 1px solid #454545; font-size: 14px; font-weight: 600; color: #f0f0f0; white-space: nowrap; }
.viewport { display: flex; flex: 1; min-height: 0; }
.canvas { display: flex; justify-content: center; flex: 1; min-width: 0; padding: 25px 11px 25px 0; }
.artboard { aspect-ratio: 1; background: #fff; border: 1px solid #000; }
.vscroll { display: flex; flex-direction: column; align-items: center; justify-content: space-between; width: 20px; padding: 6px 0; background: #4b4b4b; flex: none; }
.vthumb { width: 18px; height: 31px; background: #686868; border-radius: 9px; }
.status { display: flex; align-items: flex-start; height: 21px; padding-left: 4px; background: #535353; border-bottom: 2px solid #454545; flex: none; overflow: hidden; }
.zoom select, .board select { height: 25px; padding: 0 0 0 4px; background: #454545; color: #eee; }
.zoom { width: 85px; }
.board { width: 73px; }
.step { display: flex; gap: 10px; width: 52px; padding: 5px 0 0 12px; opacity: .4; }
.current { flex: 0 1 252px; height: 25px; line-height: 27px; border: solid #4a4a4a; border-width: 0 1px; text-align: center; color: #d0d0d0; }
.play { padding: 6px 7px 0 9px; }
.hscroll { display: flex; align-items: center; flex: 1; height: 19px; margin-right: 21px; padding: 0 6px; background: #4b4b4b; }
.hthumb { width: 32px; height: 18px; margin: 0 auto; background: #5f5f5f; border-radius: 9px; }

.dock { width: 51px; border-left: 2px solid #363636; flex: none; }
.dock .strip { padding-right: 9px; }
.group { display: flex; flex-direction: column; align-items: center; padding: 7px 0 2px; border-bottom: 1px solid #3a3a3a; }
.group button { height: 35px; }
.group .grip { width: 23px; }

.panels { display: flex; flex-direction: column; width: 303px; border: solid #363636; border-width: 0 1px 0 2px; flex: none; }
.tabs { display: flex; height: 35px; background: #424242; font-weight: 600; color: #a8a8a8; }
.tabs button { height: 34px; border: solid #3b3b3b; border-width: 0 1px 1px 0; }
.tabs .on { display: flex; align-items: center; gap: 6px; height: 34px; padding: 0 13px 0 6px; background: #535353; border: 0; color: #f4f4f4; }
.tabs .plain { padding: 0 12px; }
.w84 { width: 83px; }
.w92 { width: 91px; }
.w74 { width: 73px; }
.tabs .burger { display: flex; flex: 1; align-items: center; justify-content: flex-end; padding-right: 8px; border-right: 0; }
.color { padding-bottom: 9px; border-bottom: 2px solid #3a3a3a; }
.mixer { display: flex; padding: 8px 30px 0 7px; }
.channels { flex: 1; margin-left: 6px; }
.channel { display: flex; align-items: flex-start; height: 41px; color: #c8c8c8; }
.channel label { width: 10px; margin: 7px 8px 0 0; text-align: center; }
.channel input[type="range"] { flex: 1; height: 16px; margin: 11px 4px 0 0; appearance: none; }
.channel input[type="range"]::-webkit-slider-runnable-track { height: 16px; background: var(--track) 6px 0 / calc(100% - 12px) 5px no-repeat; }
.channel input[type="range"]::-webkit-slider-thumb { width: 12px; height: 10px; margin-top: 5px; appearance: none; background: #c8c8c8; clip-path: polygon(50% 0, 100% 45%, 100% 100%, 0 100%, 0 45%); }
.field { height: 26px; padding-left: 5px; background: #454545; border: 1px solid #5f5f5f; border-radius: 3px; color: #f0f0f0; }
.channel .field { width: 44px; }
.hexrow { display: flex; align-items: center; gap: 5px; margin-top: 7px; padding: 0 21px 0 7px; }
.hexrow .field { width: 75px; padding-left: 5px; }
.spectrum { height: 29px; margin: 8px 23px 0 8px; border-top: 1px solid #333; background: linear-gradient(#fff, transparent 50%, #000), linear-gradient(90deg, #f00, #ff0 17%, #0f0 33%, #0ff 50%, #00f 67%, #f0f 83%, #f00); }
.layers { display: flex; flex: 1; flex-direction: column; min-height: 0; }
.list { flex: 1; margin: 7px 7px 0 7px; padding: 0; border: 1px solid #5c5c5c; border-radius: 2px; list-style: none; }
.list li { display: flex; align-items: center; height: 25px; background: #50667f; color: #f0f0f0; }
.eye { width: 27px; height: 25px; padding-right: 2px; border-right: 1px solid #48607a; }
.bar { width: 4px; height: 23px; margin-left: 26px; background: #4f80ff; }
.thumb { width: 22px; height: 22px; margin: 0 6px 0 33px; background: #fff; border: 1px solid #000; }
.target { width: 26px; height: 25px; border-left: 1px solid #48607a; }
.corner { align-self: flex-start; margin-left: 12px; }
.foot { display: flex; align-items: center; height: 26px; padding: 2px 27px 0 7px; }
.foot button { width: 32px; }
.foot .off { opacity: .35; }

.taskbar { display: flex; height: 50px; background: #3a1434; color: #fff; flex: none; }
.start { width: 60px; background: #280920; }
.find { display: flex; align-items: center; gap: 15px; width: 430px; padding-left: 15px; background: #f4f2f4; border: solid #c8c0c8; border-width: 1px 0; }
.find input { flex: 1; font-size: 18px; line-height: 24px; color: #333; }
.find input::placeholder { color: #3a3a3a; opacity: 1; }
.cell { width: 60px; }
.apps { display: flex; margin-left: 3px; }
.taskapp { width: 62px; border: solid transparent; border-width: 0 0 3px; }
.taskapp.open { background: linear-gradient(#f0a0e6, #f0a0e6) center bottom / 51px 3px no-repeat border-box; }
.taskapp.active { background: #6d0a63; border-color: #f0a0e6; background-clip: padding-box; }
.tray { display: flex; align-items: center; gap: 11px; padding-right: 5px; }
.lang { margin-left: 2px; font-size: 14px; }
.clock { display: flex; flex-direction: column; width: 88px; font-size: 14px; line-height: 23px; text-align: center; }
.notice { position: relative; align-self: stretch; width: 52px; padding-right: 18px; border-right: 1px solid #9a7c96; }
.notice b { position: absolute; right: 15px; bottom: 5px; width: 20px; height: 20px; border: 1px solid #a070a0; border-radius: 50%; background: #680a60; font-size: 14px; font-weight: 400; line-height: 18px; text-align: center; }
</style>
